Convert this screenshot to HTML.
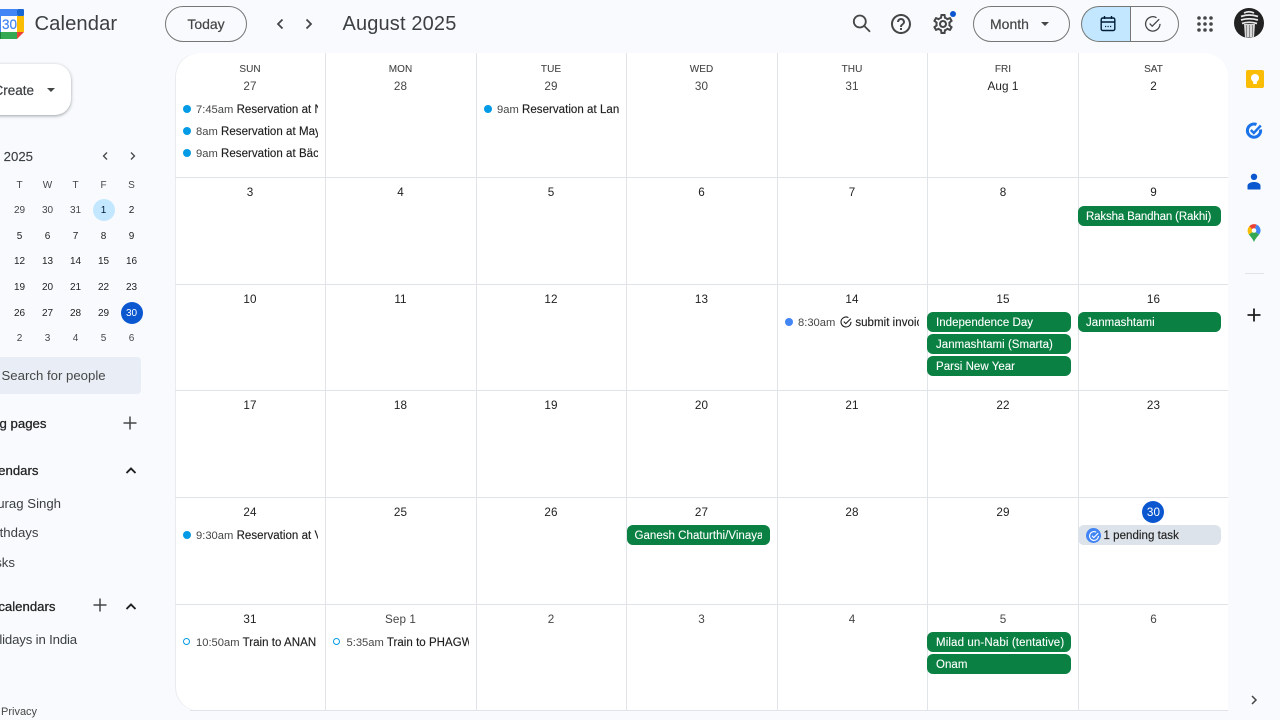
<!DOCTYPE html>
<html><head><meta charset="utf-8"><title>Google Calendar - August 2025</title>
<style>
html,body{margin:0;padding:0;width:1280px;height:720px;overflow:hidden;background:#f8fafd;font-family:"Liberation Sans",sans-serif;color:#1f1f1f}
#r{position:relative;width:1280px;height:720px;overflow:hidden}
#r div,#r svg,#r span.a{position:absolute}
.c{text-align:center;white-space:nowrap;height:16px;line-height:16px}
.n{width:150px;font-size:11.7px;letter-spacing:.1px;color:#1f1f1f;margin-top:1px}
.g{color:#444746}
.h{width:150px;font-size:10px;color:#444746;letter-spacing:.05px;-webkit-text-stroke:.1px #444746;margin-top:1px}
.l{background:#e0e4e8}
.m{width:26px;font-size:10px;color:#1f1f1f;margin-top:1px}
.mg{color:#444746}
.ev{height:20px;line-height:22px;font-size:11.5px;letter-spacing:.04px;overflow:hidden;white-space:nowrap;color:#1f1f1f;-webkit-text-stroke:.15px #1f1f1f}
.ev i{font-style:normal;color:#444746;font-size:11.2px;letter-spacing:0;-webkit-text-stroke:0}
.dot{width:8px;height:8px;border-radius:50%;background:#039be5}
.ring{width:5px;height:5px;border-radius:50%;border:1.5px solid #039be5;background:#fff}
.chip{height:20px;line-height:22px;background:#0b8043;color:#fff;border-radius:6px;font-size:11.5px;letter-spacing:.03px;white-space:nowrap;overflow:hidden;-webkit-text-stroke:.1px #fff}
.chip span{position:absolute;left:8px;top:0;height:20px;overflow:hidden}
.s{font-size:13.2px;letter-spacing:0;white-space:nowrap;text-align:right;height:20px;line-height:20px;color:#1f1f1f;left:-100px;margin-top:1px}
.s.b{-webkit-text-stroke:.25px #1f1f1f}
.s.q{color:#3c4043}
.btn{border:1px solid #747775;box-sizing:border-box;border-radius:19px;height:36px}
.tx{white-space:nowrap}
</style></head><body><div id="r">

<!-- Header -->
<svg style="left:-6px;top:9px" width="30" height="30" viewBox="0 0 30 30">
<path d="M6 0H23V7H7V23H0V6Q0 0 6 0Z" fill="#4285f4"/><rect x="23" y="0" width="7" height="7" fill="#1967d2" rx="1"/>
<rect x="23" y="7" width="7" height="16" fill="#fbbc04"/><rect x="7" y="23" width="16" height="7" fill="#34a853"/>
<path d="M0 23H7V30H4Q0 30 0 26Z" fill="#188038"/><path d="M23 23H30L23 30Z" fill="#ea4335"/>
<rect x="7" y="7" width="16" height="16" fill="#fff"/>
<text x="15.5" y="20" text-anchor="middle" font-size="13.5" fill="#4285f4" stroke="#4285f4" stroke-width=".2" font-family="Liberation Sans">30</text></svg>
<div class="tx" style="left:34.5px;top:10px;font-size:20.2px;line-height:28px;color:#3c4043;letter-spacing:.1px">Calendar</div>

<div class="btn" style="left:165px;top:5.5px;width:82px"></div>
<div class="c tx" style="left:165px;top:16px;width:82px;font-size:14px;-webkit-text-stroke:.2px #444746;color:#444746">Today</div>
<svg style="left:270px;top:14px" width="20" height="20" viewBox="0 0 20 20"><path d="M12.5 5.5L8 10l4.500 4.500" fill="none" stroke="#444746" stroke-width="1.800"/></svg>
<svg style="left:299px;top:14px" width="20" height="20" viewBox="0 0 20 20"><path d="M7.500 5.500L12 10l-4.500 4.500" fill="none" stroke="#444746" stroke-width="1.800"/></svg>
<div class="tx" style="left:342.5px;top:10px;font-size:20px;line-height:28px;color:#3c4043;letter-spacing:.15px">August 2025</div>

<svg style="left:850px;top:12px" width="24" height="24" viewBox="0 0 24 24" fill="none" stroke="#444746" stroke-width="1.800"><circle cx="9.800" cy="9.500" r="6"/><path d="M14.200 13.900L20 19.700"/></svg>
<svg style="left:889px;top:12px" width="24" height="24" viewBox="0 0 24 24"><path fill="#444746" d="M11 18h2v-2h-2v2zm1-16C6.480 2 2 6.480 2 12s4.480 10 10 10 10-4.480 10-10S17.520 2 12 2zm0 18c-4.410 0-8-3.590-8-8s3.590-8 8-8 8 3.590 8 8-3.590 8-8 8zm0-14c-2.210 0-4 1.790-4 4h2c0-1.100.900-2 2-2s2 .900 2 2c0 2-3 1.750-3 5h2c0-2.250 3-2.500 3-5 0-2.210-1.790-4-4-4z"/></svg>
<svg style="left:931px;top:12px" width="24" height="24" viewBox="0 0 24 24"><path fill="#444746" d="M19.43 12.98c.04-.32.07-.64.07-.98 0-.34-.03-.66-.07-.98l2.11-1.65c.19-.15.24-.42.12-.64l-2-3.46c-.09-.16-.26-.25-.44-.25-.06 0-.12.01-.17.03l-2.49 1c-.52-.4-1.08-.73-1.69-.98l-.38-2.65C14.46 2.18 14.25 2 14 2h-4c-.25 0-.46.18-.49.42l-.38 2.65c-.61.25-1.17.59-1.69.98l-2.49-1c-.06-.02-.12-.03-.18-.03-.17 0-.34.09-.43.25l-2 3.46c-.13.22-.07.49.12.64l2.11 1.65c-.04.32-.07.65-.07.98 0 .33.03.66.07.98l-2.11 1.65c-.19.15-.24.42-.12.64l2 3.46c.09.16.26.25.44.25.06 0 .12-.01.17-.03l2.49-1c.52.4 1.08.73 1.69.98l.38 2.65c.03.24.24.42.49.42h4c.25 0 .46-.18.49-.42l.38-2.65c.61-.25 1.17-.59 1.69-.98l2.49 1c.06.02.12.03.18.03.17 0 .34-.09.43-.25l2-3.46c.12-.22.07-.49-.12-.64l-2.11-1.65zm-1.98-1.71c.04.31.05.52.05.73 0 .21-.02.43-.05.73l-.14 1.13.89.7 1.08.84-.7 1.21-1.27-.51-1.04-.42-.9.68c-.43.32-.84.56-1.25.73l-1.06.43-.16 1.13-.2 1.35h-1.4l-.19-1.35-.16-1.13-1.06-.43c-.43-.18-.83-.41-1.23-.71l-.91-.7-1.06.43-1.27.51-.7-1.21 1.08-.84.89-.7-.14-1.13c-.03-.31-.05-.54-.05-.74s.02-.43.05-.73l.14-1.13-.89-.7-1.08-.84.7-1.21 1.27.51 1.04.42.9-.68c.43-.32.84-.56 1.25-.73l1.06-.43.16-1.13.2-1.35h1.39l.19 1.35.16 1.13 1.06.43c.43.18.83.41 1.23.71l.91.7 1.06-.43 1.27-.51.7 1.21-1.07.85-.89.7.14 1.13zM12 8c-2.21 0-4 1.79-4 4s1.79 4 4 4 4-1.79 4-4-1.79-4-4-4zm0 6c-1.1 0-2-.9-2-2s.9-2 2-2 2 .9 2 2-.9 2-2 2z"/></svg>
<div style="left:950px;top:11px;width:6px;height:6px;border-radius:50%;background:#0b57d0"></div>

<div class="btn" style="left:972.5px;top:5.5px;width:97px"></div>
<div class="tx" style="left:990px;top:16px;font-size:14px;line-height:16px;color:#444746;-webkit-text-stroke:.2px #444746">Month</div>
<div style="left:1041px;top:22px;width:0;height:0;border-left:4px solid transparent;border-right:4px solid transparent;border-top:4px solid #444746"></div>

<div style="left:1081px;top:5.5px;width:49.5px;height:36px;background:#c2e7ff;border-radius:18px 0 0 18px;border:1px solid #747775;border-right:0;box-sizing:border-box"></div>
<div style="left:1130px;top:5.5px;width:49px;height:36px;border-radius:0 18px 18px 0;border:1px solid #747775;box-sizing:border-box"></div>
<svg style="left:1098px;top:14px" width="20" height="20" viewBox="0 0 20 20" fill="none" stroke="#001d35" stroke-width="1.400"><rect x="3.200" y="4" width="13.600" height="12.500" rx="1.500"/><path d="M3.200 8h13.600M6.500 2v3M13.500 2v3"/><path d="M7 12.500h1.200M9.500 12.500h1.200M12 12.500h1.200" stroke-width="1.200"/></svg>
<svg style="left:1143px;top:14px" width="20" height="20" viewBox="0 0 20 20" fill="none" stroke="#444746" stroke-width="1.300"><path d="M17 9.900A7.200 7.200 0 1 1 13.500 3.700"/><path d="M6.700 9.600l2.500 2.600 7-7"/></svg>
<svg style="left:1195px;top:14px" width="20" height="20" viewBox="0 0 20 20" fill="#444746"><circle cx="4" cy="4" r="1.800"/><circle cx="10" cy="4" r="1.800"/><circle cx="16" cy="4" r="1.800"/><circle cx="4" cy="10" r="1.800"/><circle cx="10" cy="10" r="1.800"/><circle cx="16" cy="10" r="1.800"/><circle cx="4" cy="16" r="1.800"/><circle cx="10" cy="16" r="1.800"/><circle cx="16" cy="16" r="1.800"/></svg>
<svg style="left:1234px;top:8px" width="30" height="30" viewBox="0 0 30 30"><circle cx="15" cy="15" r="15" fill="#222"/><path d="M10 5Q15 2.500 20 5M7 8.500Q15 5.500 24 8.500M7 12Q15 9.500 24 12M8 15.500Q15 13 23 15.500" stroke="#e8e8e8" stroke-width="1.800" fill="none"/><path d="M10 16L11 29.500H20L21 16Z" fill="#d8d8d8"/><path d="M12.500 17V29M15.500 17V29M18.500 17V29" stroke="#777" stroke-width=".8"/></svg>

<!-- Sidebar -->
<div style="left:-60px;top:64px;width:131px;height:51px;background:#fff;border-radius:16px;box-shadow:0 1px 2px rgba(60,64,67,.3),0 1px 3px 1px rgba(60,64,67,.15)"></div>
<div class="tx" style="left:-6.5px;top:83px;font-size:13.500px;line-height:16px;color:#3c4043;-webkit-text-stroke:.2px #3c4043">Create</div>
<div style="left:47px;top:88px;width:0;height:0;border-left:4.500px solid transparent;border-right:4.500px solid transparent;border-top:4.500px solid #444746"></div>

<div class="s b" style="top:146px;width:133px;-webkit-text-stroke:.15px #3c4043;color:#3c4043">August 2025</div>
<svg style="left:96px;top:147px" width="18" height="18" viewBox="0 0 18 18"><path d="M11 5.500L7.500 9l3.500 3.500" fill="none" stroke="#444746" stroke-width="1.300"/></svg>
<svg style="left:124px;top:147px" width="18" height="18" viewBox="0 0 18 18"><path d="M7 5.500L10.500 9 7 12.500" fill="none" stroke="#444746" stroke-width="1.300"/></svg>

<div class="c m mg" style="left:6.5px;top:176.5px">T</div><div class="c m mg" style="left:34.5px;top:176.5px">W</div><div class="c m mg" style="left:62.5px;top:176.5px">T</div><div class="c m mg" style="left:90.5px;top:176.5px">F</div><div class="c m mg" style="left:118.5px;top:176.5px">S</div>

<div style="left:93px;top:199px;width:22px;height:22px;border-radius:50%;background:#c2e7ff"></div>
<div style="left:121px;top:302px;width:22px;height:22px;border-radius:50%;background:#0b57d0"></div>

<div class="c m mg" style="left:6.5px;top:202px">29</div><div class="c m mg" style="left:34.5px;top:202px">30</div><div class="c m mg" style="left:62.5px;top:202px">31</div><div class="c m" style="left:90.5px;top:202px;color:#001d35">1</div><div class="c m" style="left:118.5px;top:202px">2</div>
<div class="c m" style="left:6.5px;top:228px">5</div><div class="c m" style="left:34.5px;top:228px">6</div><div class="c m" style="left:62.5px;top:228px">7</div><div class="c m" style="left:90.5px;top:228px">8</div><div class="c m" style="left:118.5px;top:228px">9</div>
<div class="c m" style="left:6.5px;top:253px">12</div><div class="c m" style="left:34.5px;top:253px">13</div><div class="c m" style="left:62.5px;top:253px">14</div><div class="c m" style="left:90.5px;top:253px">15</div><div class="c m" style="left:118.5px;top:253px">16</div>
<div class="c m" style="left:6.5px;top:279px">19</div><div class="c m" style="left:34.5px;top:279px">20</div><div class="c m" style="left:62.5px;top:279px">21</div><div class="c m" style="left:90.5px;top:279px">22</div><div class="c m" style="left:118.5px;top:279px">23</div>
<div class="c m" style="left:6.5px;top:305px">26</div><div class="c m" style="left:34.5px;top:305px">27</div><div class="c m" style="left:62.5px;top:305px">28</div><div class="c m" style="left:90.5px;top:305px">29</div><div class="c m" style="left:118.5px;top:305px;color:#fff">30</div>
<div class="c m mg" style="left:6.5px;top:330px">2</div><div class="c m mg" style="left:34.5px;top:330px">3</div><div class="c m mg" style="left:62.5px;top:330px">4</div><div class="c m mg" style="left:90.5px;top:330px">5</div><div class="c m mg" style="left:118.5px;top:330px">6</div>

<div style="left:-10px;top:357px;width:151px;height:37px;background:#e9eef6;border-radius:4px"></div>
<div class="tx" style="left:1.5px;top:367px;font-size:13.200px;line-height:17px;color:#444746">Search for people</div>

<div class="s b" style="top:413px;width:146.5px">Booking pages</div>
<svg style="left:120px;top:413px" width="20" height="20" viewBox="0 0 20 20"><path d="M10 3.500v13M3.500 10h13" stroke="#444746" stroke-width="1.500"/></svg>
<div class="s b" style="top:460px;width:138.5px">My calendars</div>
<svg style="left:121px;top:460px" width="20" height="20" viewBox="0 0 20 20"><path d="M5.500 13L10 8.500l4.500 4.500" fill="none" stroke="#1f1f1f" stroke-width="1.900"/></svg>
<div class="s q" style="top:493px;width:161px">Anurag Singh</div>
<div class="s q" style="top:522px;width:138.5px">Birthdays</div>
<div class="s q" style="top:551.5px;width:115px">Tasks</div>
<div class="s b" style="top:596px;width:155.5px">Other calendars</div>
<svg style="left:90px;top:595px" width="20" height="20" viewBox="0 0 20 20"><path d="M10 3.500v13M3.500 10h13" stroke="#444746" stroke-width="1.500"/></svg>
<svg style="left:121px;top:595.5px" width="20" height="20" viewBox="0 0 20 20"><path d="M5.500 13L10 8.500l4.500 4.500" fill="none" stroke="#1f1f1f" stroke-width="1.900"/></svg>
<div class="s q" style="top:629px;width:177px;letter-spacing:-.15px">Holidays in India</div>
<div class="tx" style="left:1px;top:705px;font-size:11px;line-height:14px;color:#444746">Privacy</div>

<!-- Grid -->
<div style="left:174.5px;top:53px;width:1053.5px;height:657.5px;background:#fff;border-radius:24px 24px 0 24px;box-shadow:inset 1px 0 0 #e8ecf1"></div>
<div class="l" style="left:325px;top:53px;width:1px;height:657px"></div>
<div class="l" style="left:475.5px;top:53px;width:1px;height:657px"></div>
<div class="l" style="left:626px;top:53px;width:1px;height:657px"></div>
<div class="l" style="left:776.5px;top:53px;width:1px;height:657px"></div>
<div class="l" style="left:927px;top:53px;width:1px;height:657px"></div>
<div class="l" style="left:1078px;top:53px;width:1px;height:657px"></div>
<div class="l" style="left:175px;top:177px;width:1053px;height:1px"></div>
<div class="l" style="left:175px;top:284px;width:1053px;height:1px"></div>
<div class="l" style="left:175px;top:390px;width:1053px;height:1px"></div>
<div class="l" style="left:175px;top:497px;width:1053px;height:1px"></div>
<div class="l" style="left:175px;top:603.5px;width:1053px;height:1px"></div>
<div class="l" style="left:190px;top:710px;width:1038px;height:1px"></div>

<div class="c h" style="left:175px;top:60.5px">SUN</div><div class="c h" style="left:325.5px;top:60.5px">MON</div><div class="c h" style="left:476px;top:60.5px">TUE</div><div class="c h" style="left:626.5px;top:60.5px">WED</div><div class="c h" style="left:777px;top:60.5px">THU</div><div class="c h" style="left:928px;top:60.5px">FRI</div><div class="c h" style="left:1078.5px;top:60.5px">SAT</div>

<div class="c n g" style="left:175px;top:78px">27</div><div class="c n g" style="left:325.5px;top:78px">28</div><div class="c n g" style="left:476px;top:78px">29</div><div class="c n g" style="left:626.5px;top:78px">30</div><div class="c n g" style="left:777px;top:78px">31</div><div class="c n" style="left:928px;top:78px">Aug 1</div><div class="c n" style="left:1078.5px;top:78px">2</div>
<div class="c n" style="left:175px;top:184px">3</div><div class="c n" style="left:325.5px;top:184px">4</div><div class="c n" style="left:476px;top:184px">5</div><div class="c n" style="left:626.5px;top:184px">6</div><div class="c n" style="left:777px;top:184px">7</div><div class="c n" style="left:928px;top:184px">8</div><div class="c n" style="left:1078.5px;top:184px">9</div>
<div class="c n" style="left:175px;top:291px">10</div><div class="c n" style="left:325.5px;top:291px">11</div><div class="c n" style="left:476px;top:291px">12</div><div class="c n" style="left:626.5px;top:291px">13</div><div class="c n" style="left:777px;top:291px">14</div><div class="c n" style="left:928px;top:291px">15</div><div class="c n" style="left:1078.5px;top:291px">16</div>
<div class="c n" style="left:175px;top:397px">17</div><div class="c n" style="left:325.5px;top:397px">18</div><div class="c n" style="left:476px;top:397px">19</div><div class="c n" style="left:626.5px;top:397px">20</div><div class="c n" style="left:777px;top:397px">21</div><div class="c n" style="left:928px;top:397px">22</div><div class="c n" style="left:1078.5px;top:397px">23</div>
<div class="c n" style="left:175px;top:504px">24</div><div class="c n" style="left:325.5px;top:504px">25</div><div class="c n" style="left:476px;top:504px">26</div><div class="c n" style="left:626.5px;top:504px">27</div><div class="c n" style="left:777px;top:504px">28</div><div class="c n" style="left:928px;top:504px">29</div>
<div style="left:1142px;top:501px;width:22px;height:22px;border-radius:50%;background:#0b57d0"></div>
<div class="c n" style="left:1078.5px;top:503.5px;color:#fff">30</div>
<div class="c n" style="left:175px;top:611px">31</div><div class="c n g" style="left:325.5px;top:611px">Sep 1</div><div class="c n g" style="left:476px;top:611px">2</div><div class="c n g" style="left:626.5px;top:611px">3</div><div class="c n g" style="left:777px;top:611px">4</div><div class="c n g" style="left:928px;top:611px">5</div><div class="c n g" style="left:1078.5px;top:611px">6</div>

<!-- Events -->
<div class="dot" style="left:183px;top:105px"></div><div class="ev" style="left:196px;top:99px;width:122px"><i>7:45am</i> Reservation at Nobu</div>
<div class="dot" style="left:183px;top:127px"></div><div class="ev" style="left:196px;top:121px;width:122px"><i>8am</i> Reservation at Maya</div>
<div class="dot" style="left:183px;top:149px"></div><div class="ev" style="left:196px;top:143px;width:122px"><i>9am</i> Reservation at Bäckerei</div>
<div class="dot" style="left:484px;top:105px"></div><div class="ev" style="left:497px;top:99px;width:122px"><i>9am</i> Reservation at Lantern</div>

<div class="chip" style="left:1078px;top:205.5px;width:143px"><span style="width:130px;letter-spacing:-.15px">Raksha Bandhan (Rakhi)</span></div>

<div class="dot" style="left:785px;top:318px;background:#4285f4"></div>
<div class="ev" style="left:798px;top:312px;width:121px"><i>8:30am</i><span style="display:inline-block;width:20px"></span>submit invoice</div>
<svg style="left:840px;top:316px" width="12" height="12" viewBox="0 0 12 12" fill="none" stroke="#1f1f1f" stroke-width="1.100"><path d="M11 5.900A5 5 0 1 1 8.400 1.600"/><path d="M3.800 5.600l2 2 5-5"/></svg>

<div class="chip" style="left:927px;top:312px;width:144px"><span style="width:130px;left:9px">Independence Day</span></div>
<div class="chip" style="left:927px;top:334px;width:144px"><span style="width:130px;left:9px">Janmashtami (Smarta)</span></div>
<div class="chip" style="left:927px;top:356px;width:144px"><span style="width:130px;left:9px">Parsi New Year</span></div>
<div class="chip" style="left:1078px;top:312px;width:143px"><span style="width:130px">Janmashtami</span></div>

<div class="dot" style="left:183px;top:531px"></div><div class="ev" style="left:196px;top:525px;width:122px"><i>9:30am</i> Reservation at Vedge</div>
<div class="chip" style="left:626.5px;top:525px;width:143px"><span style="width:127px">Ganesh Chaturthi/Vinayaka Chaturthi</span></div>

<div style="left:1078px;top:525px;width:143px;height:20px;background:#dde3ea;border-radius:6px"></div>
<div style="left:1086px;top:528px;width:15px;height:15px;border-radius:50%;background:#4285f4"></div>
<svg style="left:1087.5px;top:529.5px" width="12" height="12" viewBox="0 0 12 12" fill="none" stroke="#fff" stroke-width="1.100"><path d="M10.400 6A4.400 4.400 0 1 1 8.200 2.200"/><path d="M4 5.800l1.800 1.800 4.400-4.400"/></svg>
<div class="ev" style="left:1103.5px;top:525px;width:110px">1 pending task</div>

<div class="ring" style="left:183px;top:638px"></div><div class="ev" style="left:196px;top:632px;width:121px"><i>10:50am</i> Train to ANAND</div>
<div class="ring" style="left:333px;top:638px"></div><div class="ev" style="left:346.5px;top:632px;width:122px"><i>5:35am</i> Train to PHAGWARA</div>

<div class="chip" style="left:927px;top:632px;width:144px"><span style="width:130px;left:9px;letter-spacing:.12px">Milad un-Nabi (tentative)</span></div>
<div class="chip" style="left:927px;top:654px;width:144px"><span style="width:130px;left:9px">Onam</span></div>

<!-- Right rail -->
<svg style="left:1245.500px;top:70px" width="18" height="18" viewBox="0 0 18 18"><rect width="18" height="18" rx="2" fill="#fbbc04"/><circle cx="9" cy="8" r="4" fill="#fff"/><rect x="7.200" y="11" width="3.600" height="3" fill="#fff"/></svg>
<svg style="left:1245px;top:121px" width="19" height="19" viewBox="0 0 19 19" fill="none"><path d="M15.500 8.500A6.600 6.600 0 1 1 11.500 3.500" stroke="#1a73e8" stroke-width="3"/><path d="M5.800 9l3 3 7-7.500" stroke="#1a73e8" stroke-width="2.400"/></svg>
<svg style="left:1246px;top:173px" width="16" height="17" viewBox="0 0 16 17" fill="#0b57d0"><circle cx="8" cy="3.800" r="3.200"/><path d="M1.500 16v-3.200C1.500 10.300 5 9 8 9s6.500 1.300 6.500 3.800V16Q14.500 16.500 14 16.500H2Q1.500 16.500 1.500 16Z"/></svg>
<svg style="left:1247px;top:224px" width="14" height="18" viewBox="0 0 14 18"><path d="M7 18C5.500 14.500 3.500 12.500 1.800 10.500L7 7Z" fill="#34a853"/><path d="M7 18C8.500 14.500 10.500 12.500 12.200 10.500L7 7Z" fill="#34a853"/><path d="M1.800 10.500A6.500 6.500 0 0 1 2.300 2.300L7 7Z" fill="#fbbc04"/><path d="M2.300 2.300A6.500 6.500 0 0 1 9.500 .5L7 7Z" fill="#ea4335"/><path d="M9.500 .5A6.500 6.500 0 0 1 12.200 10.500L7 7Z" fill="#4285f4"/><circle cx="7" cy="6.500" r="2.300" fill="#fff"/></svg>
<div class="l" style="left:1245px;top:273px;width:19px;height:1px"></div>
<svg style="left:1244px;top:305px" width="20" height="20" viewBox="0 0 20 20"><path d="M10 3.500v13M3.500 10h13" stroke="#1f1f1f" stroke-width="1.800"/></svg>
<svg style="left:1245px;top:691px" width="18" height="18" viewBox="0 0 18 18"><path d="M7 5l4 4-4 4" fill="none" stroke="#444746" stroke-width="1.500"/></svg>
</div></body></html>
